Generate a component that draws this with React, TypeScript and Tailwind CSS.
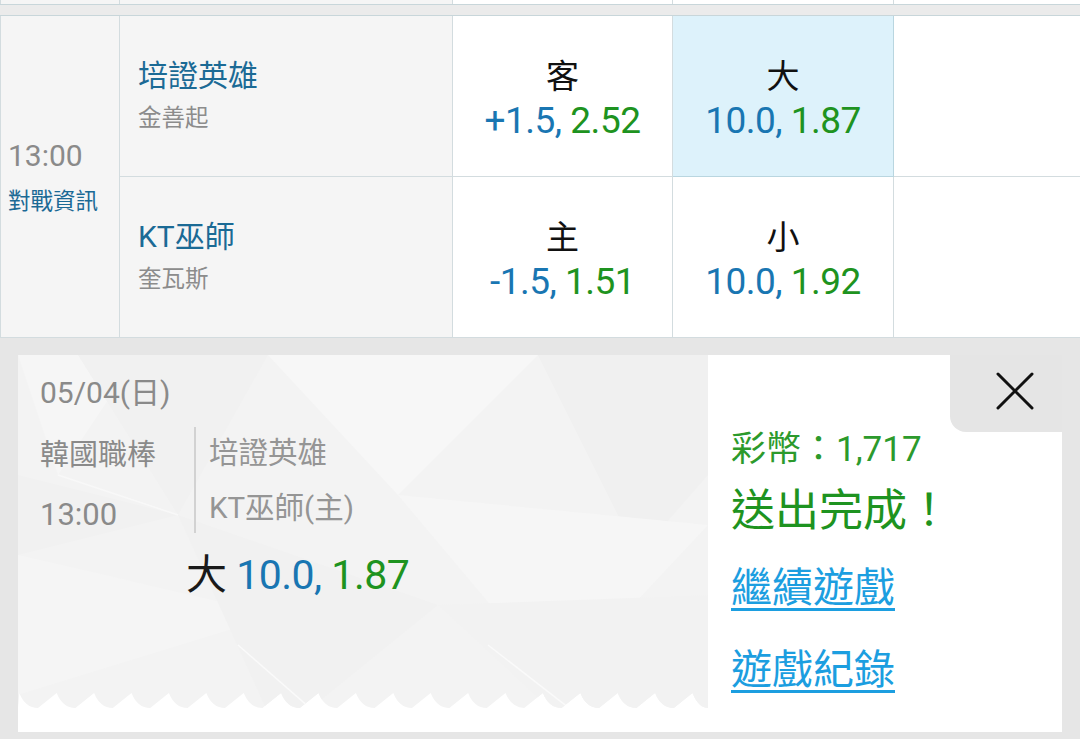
import React from "react";

const BORDER = "border-[#d3dcdf]";

function OddsCell({
  label,
  a,
  b,
  highlight,
}: {
  label: string;
  a: string;
  b: string;
  highlight?: boolean;
}) {
  return (
    <div
      className={`flex flex-col items-center pt-[41px] border-r border-b ${
        highlight ? "bg-[#ddf2fb] border-[#b9d6e0]" : `bg-white ${BORDER}`
      }`}
    >
      <div className="text-[33px] leading-[40px] text-[#111]">{label}</div>
      <div className="text-[37px] leading-[46px] tracking-[-0.5px] mt-[1px]">
        <span className="text-[#1976b2]">{a}</span>
        <span className="text-[#1e9320]">{b}</span>
      </div>
    </div>
  );
}

function TeamCell({ name, pitcher }: { name: string; pitcher: string }) {
  return (
    <div className={`flex flex-col pt-[40px] pl-[18px] bg-[#f5f5f5] border-r border-b ${BORDER}`}>
      <div className="text-[30px] leading-[40px] text-[#1b6a95]">{name}</div>
      <div className="text-[23.5px] leading-[40px] text-[#8c8c8c] mt-[2px]">{pitcher}</div>
    </div>
  );
}

function Pattern() {
  const W = 690;
  const H = 377;
  const top = 338;
  const bot = 353;
  const period = 37.4;
  let d = `M0 0 L${W} 0 L${W} ${bot} `;
  const pts: string[] = [];
  let x = 20;
  const xs: number[] = [];
  while (x < W + period) {
    xs.push(x);
    x += period;
  }
  for (let i = xs.length - 1; i >= 0; i--) {
    const vx = xs[i];
    const px = vx - period / 2;
    pts.push(`L${Math.min(vx, W)} ${bot}`);
    pts.push(`Q${px + 6} ${bot} ${px} ${top}`);
  }
  d += pts.join(" ") + ` L0 ${bot} Z`;
  return (
    <svg className="absolute inset-0" width={W} height={H} viewBox={`0 0 ${W} ${H}`}>
      <defs>
        <clipPath id="zz">
          <path d={d} />
        </clipPath>
      </defs>
      <g clipPath="url(#zz)">
        <rect x="0" y="0" width={W} height={H} fill="#f3f3f3" />
        <polygon points="0,0 120,0 40,120" fill="#f6f6f6" />
        <polygon points="60,0 250,0 160,160" fill="#f1f1f1" />
        <polygon points="250,0 520,0 380,140" fill="#f7f7f7" />
        <polygon points="520,0 690,0 690,120 620,200" fill="#f0f0f0" />
        <polygon points="0,200 260,260 0,340" fill="#f5f5f5" />
        <polygon points="160,160 420,250 260,380" fill="#f1f1f1" />
        <polygon points="380,140 690,170 540,330" fill="#f6f6f6" />
        <polygon points="420,250 700,240 690,380 560,380" fill="#f2f2f2" />
        <polygon points="0,120 160,160 0,200" fill="#f1f1f1" />
        <line x1="40" y1="120" x2="160" y2="160" stroke="#f8f8f8" strokeWidth="1.5" />
        <line x1="220" y1="290" x2="300" y2="360" stroke="#fafafa" strokeWidth="1.5" />
        <line x1="470" y1="290" x2="560" y2="360" stroke="#fafafa" strokeWidth="1.5" />
      </g>
    </svg>
  );
}

export default function App() {
  return (
    <div className="w-[1080px] h-[739px] overflow-hidden bg-[#e6e6e6] font-[Roboto,'Noto_Sans_CJK_TC',sans-serif]">
      {/* previous row stub */}
      <div className={`grid grid-cols-[120px_333px_220px_221px_1fr] h-[5px] border-b border-[#c8d6da]`}>
        <div className={`bg-[#f5f5f5] border-r border-l ${BORDER}`} />
        <div className={`bg-[#f5f5f5] border-r ${BORDER}`} />
        <div className={`bg-white border-r ${BORDER}`} />
        <div className={`bg-white border-r ${BORDER}`} />
        <div className="bg-white" />
      </div>
      <div className="h-[11px] bg-[#ebebeb] border-b border-[#c8d6da]" />

      {/* main row */}
      <div className="grid grid-cols-[120px_333px_220px_221px_1fr] grid-rows-[161px_161px]">
        <div
          className={`row-span-2 flex flex-col justify-center pl-[7px] bg-[#f5f5f5] border-l border-r border-b ${BORDER}`}
        >
          <div className="text-[30px] leading-[40px] text-[#8a8a8a]">13:00</div>
          <div className="text-[22.5px] leading-[34px] text-[#1b6a95] mt-[8px]">對戰資訊</div>
        </div>
        <TeamCell name="培證英雄" pitcher="金善起" />
        <OddsCell label="客" a="+1.5, " b="2.52" />
        <OddsCell label="大" a="10.0, " b="1.87" highlight />
        <div className={`bg-white border-b ${BORDER}`} />
        <TeamCell name="KT巫師" pitcher="奎瓦斯" />
        <OddsCell label="主" a="-1.5, " b="1.51" />
        <OddsCell label="小" a="10.0, " b="1.92" />
        <div className={`bg-white border-b ${BORDER}`} />
      </div>

      {/* result card */}
      <div className="ml-[18px] mt-[17px] w-[1044px] h-[377px] bg-white flex">
        <div className="relative w-[690px] h-full">
          <Pattern />
          <div className="relative pl-[22px] pt-[20px]">
            <div className="text-[30px] leading-[36px] text-[#8a8a8a]">05/04(日)</div>
            <div className="flex mt-[16px]">
              <div className="w-[154px] text-[#8a8a8a]">
                <div className="text-[29px] leading-[56px]">韓國職棒</div>
                <div className="text-[31px] leading-[56px] mt-[4px]">13:00</div>
              </div>
              <div className="w-[2px] h-[106px] bg-[#d2d2d2]" />
              <div className="pl-[13px] text-[#959595] text-[29.5px]">
                <div className="leading-[52px]">培證英雄</div>
                <div className="leading-[52px] mt-[3px]">KT巫師(主)</div>
              </div>
            </div>
            <div className="ml-[146px] mt-[10px] text-[41px] leading-[44px] tracking-[-0.5px]">
              <span className="text-[#1a1a1a]">大 </span>
              <span className="text-[#1976b2]">10.0, </span>
              <span className="text-[#1e9320]">1.87</span>
            </div>
          </div>
        </div>
        <div className="flex-1 flex flex-col">
          <div className="self-end w-[112px] h-[77px] bg-[#e5e5e5] rounded-bl-[16px] flex items-center justify-center pl-[18px]">
            <svg width="40" height="40" viewBox="0 0 40 40" className="-mt-[6px]">
              <path d="M3 3 L37 37 M37 3 L3 37" stroke="#111" strokeWidth="3" strokeLinecap="round" />
            </svg>
          </div>
          <div className="pl-[23px]">
            <div className="text-[35px] leading-[36px] text-[#2c9a2c]">彩幣：1,717</div>
            <div className="text-[44px] leading-[50px] text-[#1e9320] mt-[18px]">送出完成！</div>
            <div className="text-[41px] leading-[50px] text-[#1c9ee0] underline decoration-[3px] underline-offset-[6px] mt-[27px]">
              繼續遊戲
            </div>
            <div className="text-[41px] leading-[50px] text-[#1c9ee0] underline decoration-[3px] underline-offset-[6px] mt-[32px]">
              遊戲紀錄
            </div>
          </div>
        </div>
      </div>
    </div>
  );
}
